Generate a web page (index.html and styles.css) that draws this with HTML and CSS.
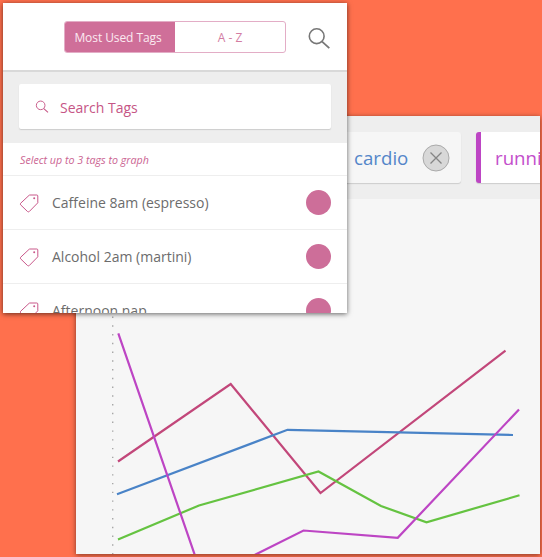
FILE: index.html
```html
<!DOCTYPE html>
<html lang="en">
<head>
<meta charset="utf-8">
<title>Tags</title>
<link rel="stylesheet" href="styles.css">
</head>
<body>
<svg class="defs" aria-hidden="true">
  <symbol id="tag" viewBox="0 0 20 20"><path d="M11 2H17.8Q18.8 2 18.8 3V9.8L10.3 18.5Q9.4 19.3 8.5 18.5L1.6 11.8Q.9 11 1.6 10.3L10 2.4Q10.4 2 11 2Z" fill="none" stroke="currentColor" stroke-width="1"/><circle cx="15.2" cy="5.2" r="1" fill="currentColor"/></symbol>
  <symbol id="search" viewBox="0 0 24 24"><circle cx="9.7" cy="9.2" r="7.4" fill="none" stroke="currentColor" stroke-width="1.6"/><path d="M15.1 14.6L22.3 21.2" stroke="currentColor" stroke-width="1.8"/></symbol>
</svg>
<main class="desktop">
  <section class="graph">
    <div class="chips">
      <div class="chip chip-cardio"><span>cardio</span>
        <svg class="close" viewBox="0 0 28 28"><circle cx="14" cy="14" r="13"/><path d="M8.5 8.5L19.5 19.5M19.5 8.5L8.5 19.5"/></svg>
      </div>
      <div class="chip chip-running"><span>running</span></div>
    </div>
    <svg class="chart" viewBox="76 199 464 355">
      <path class="axis" d="M112.7 316.5V554"/>
      <path class="rose" d="M118 461.5L230.7 384L320.5 493L505.5 350.7"/>
      <path class="blue" d="M117 494.3L287.5 429.8L513 435"/>
      <path class="green" d="M118 539.5L199 505.5L318.5 471.5L381 506L426.5 522.3L519.5 495.3"/>
      <path class="purple" d="M118.3 333.3L194.8 555L215 575L256 554.3L303.5 530.5L397.7 537.8L519 409.5"/>
    </svg>
  </section>
  <section class="tags">
    <header class="top">
      <div class="tabs"><span class="tab active">Most Used Tags</span><span class="tab">A - Z</span></div>
      <svg class="find"><use href="#search"/></svg>
    </header>
    <div class="search">
      <div class="field"><svg><use href="#search"/></svg><span>Search Tags</span></div>
    </div>
    <p class="hint">Select up to 3 tags to graph</p>
    <ul class="list">
      <li><svg><use href="#tag"/></svg><span>Caffeine 8am (espresso)</span><i></i></li>
      <li><svg><use href="#tag"/></svg><span>Alcohol 2am (martini)</span><i></i></li>
      <li><svg><use href="#tag"/></svg><span>Afternoon nap</span><i></i></li>
    </ul>
  </section>
</main>
</body>
</html>
```
FILE: styles.css
```css
* { box-sizing: border-box; }
body { margin: 0; font-family: "Open Sans", sans-serif; }
.defs { position: absolute; width: 0; height: 0; }
.desktop { position: relative; width: 542px; height: 557px; overflow: hidden; background: #ff704d; }
.graph { position: absolute; left: 76px; top: 116px; width: 464px; height: 438px; overflow: hidden; background: #f6f6f6; box-shadow: 0 1px 5px rgba(0,0,0,.5); }
.chips { display: flex; gap: 15px; height: 83px; padding: 16px 0; background: #eee; }
.chip { display: flex; flex: none; align-items: center; height: 51px; border-radius: 3px; box-shadow: 0 1px 1px #ccc; font-size: 18.7px; }
.chip span { padding-bottom: 1px; }
.chip-cardio { width: 385px; padding: 0 11px 0 278px; justify-content: space-between; background: #f6f6f6; color: #5486c9; }
.close { width: 28px; height: 28px; }
.close circle { fill: #d8d8d8; stroke: #aaa; stroke-width: 1; }
.close path { stroke: #858585; stroke-width: 1.3; }
.chip-running { width: 180px; padding-left: 14px; border-left: 5px solid #bd45c4; background: #fff; color: #c34ecb; }
.chart { display: block; width: 464px; height: 355px; fill: none; stroke-width: 2.2; }
.axis { stroke: #a8a8a8; stroke-width: 1.4; stroke-dasharray: 1.4 7.36; }
.rose { stroke: #c2477a; }
.blue { stroke: #4983c7; }
.green { stroke: #65c341; }
.purple { stroke: #bd45c4; }
.tags { position: absolute; left: 3px; top: 3px; width: 344px; height: 310px; overflow: hidden; background: #fff; box-shadow: 0 1px 5px rgba(0,0,0,.6); }
.top { display: flex; align-items: center; height: 69px; padding: 0 16px 0 61px; border-bottom: 2px solid #d9d9d9; justify-content: space-between; }
.tabs { display: flex; width: 222px; height: 32px; overflow: hidden; border: 1px solid #e3adc6; border-radius: 3px; }
.tab { width: 110px; color: #d37da2; font-size: 12px; line-height: 31px; text-align: center; }
.tab.active { padding-right: 4px; background: #cf6f99; color: #fbeaf1; letter-spacing: -.08px; }
.find { width: 24px; height: 24px; margin-top: 4px; color: #777; }
.search { height: 71px; padding: 12px 16px 0; background: #eee; }
.field { display: flex; align-items: center; height: 45px; padding-left: 15.5px; border-radius: 2px; background: #fff; box-shadow: 0 1px 1px #ccc; color: #c65585; font-size: 14px; }
.field span { padding-top: 2px; }
.field svg { width: 14px; height: 14px; margin: 1.5px 11.5px 0 0; }
.hint { height: 32px; margin: 0; padding-left: 17px; color: #cb6492; font-size: 10.7px; font-style: italic; line-height: 34px; }
.list { margin: 0; padding: 0; list-style: none; }
.list li { display: flex; align-items: center; height: 54px; padding: 0 16px; border-top: 1px solid #eee; color: #6c6c6c; font-size: 14px; }
.list svg { width: 20px; height: 20px; margin-right: 13px; color: #c9588a; }
.list i { width: 25px; height: 25px; margin-left: auto; border-radius: 50%; background: #cd6e99; }
```
